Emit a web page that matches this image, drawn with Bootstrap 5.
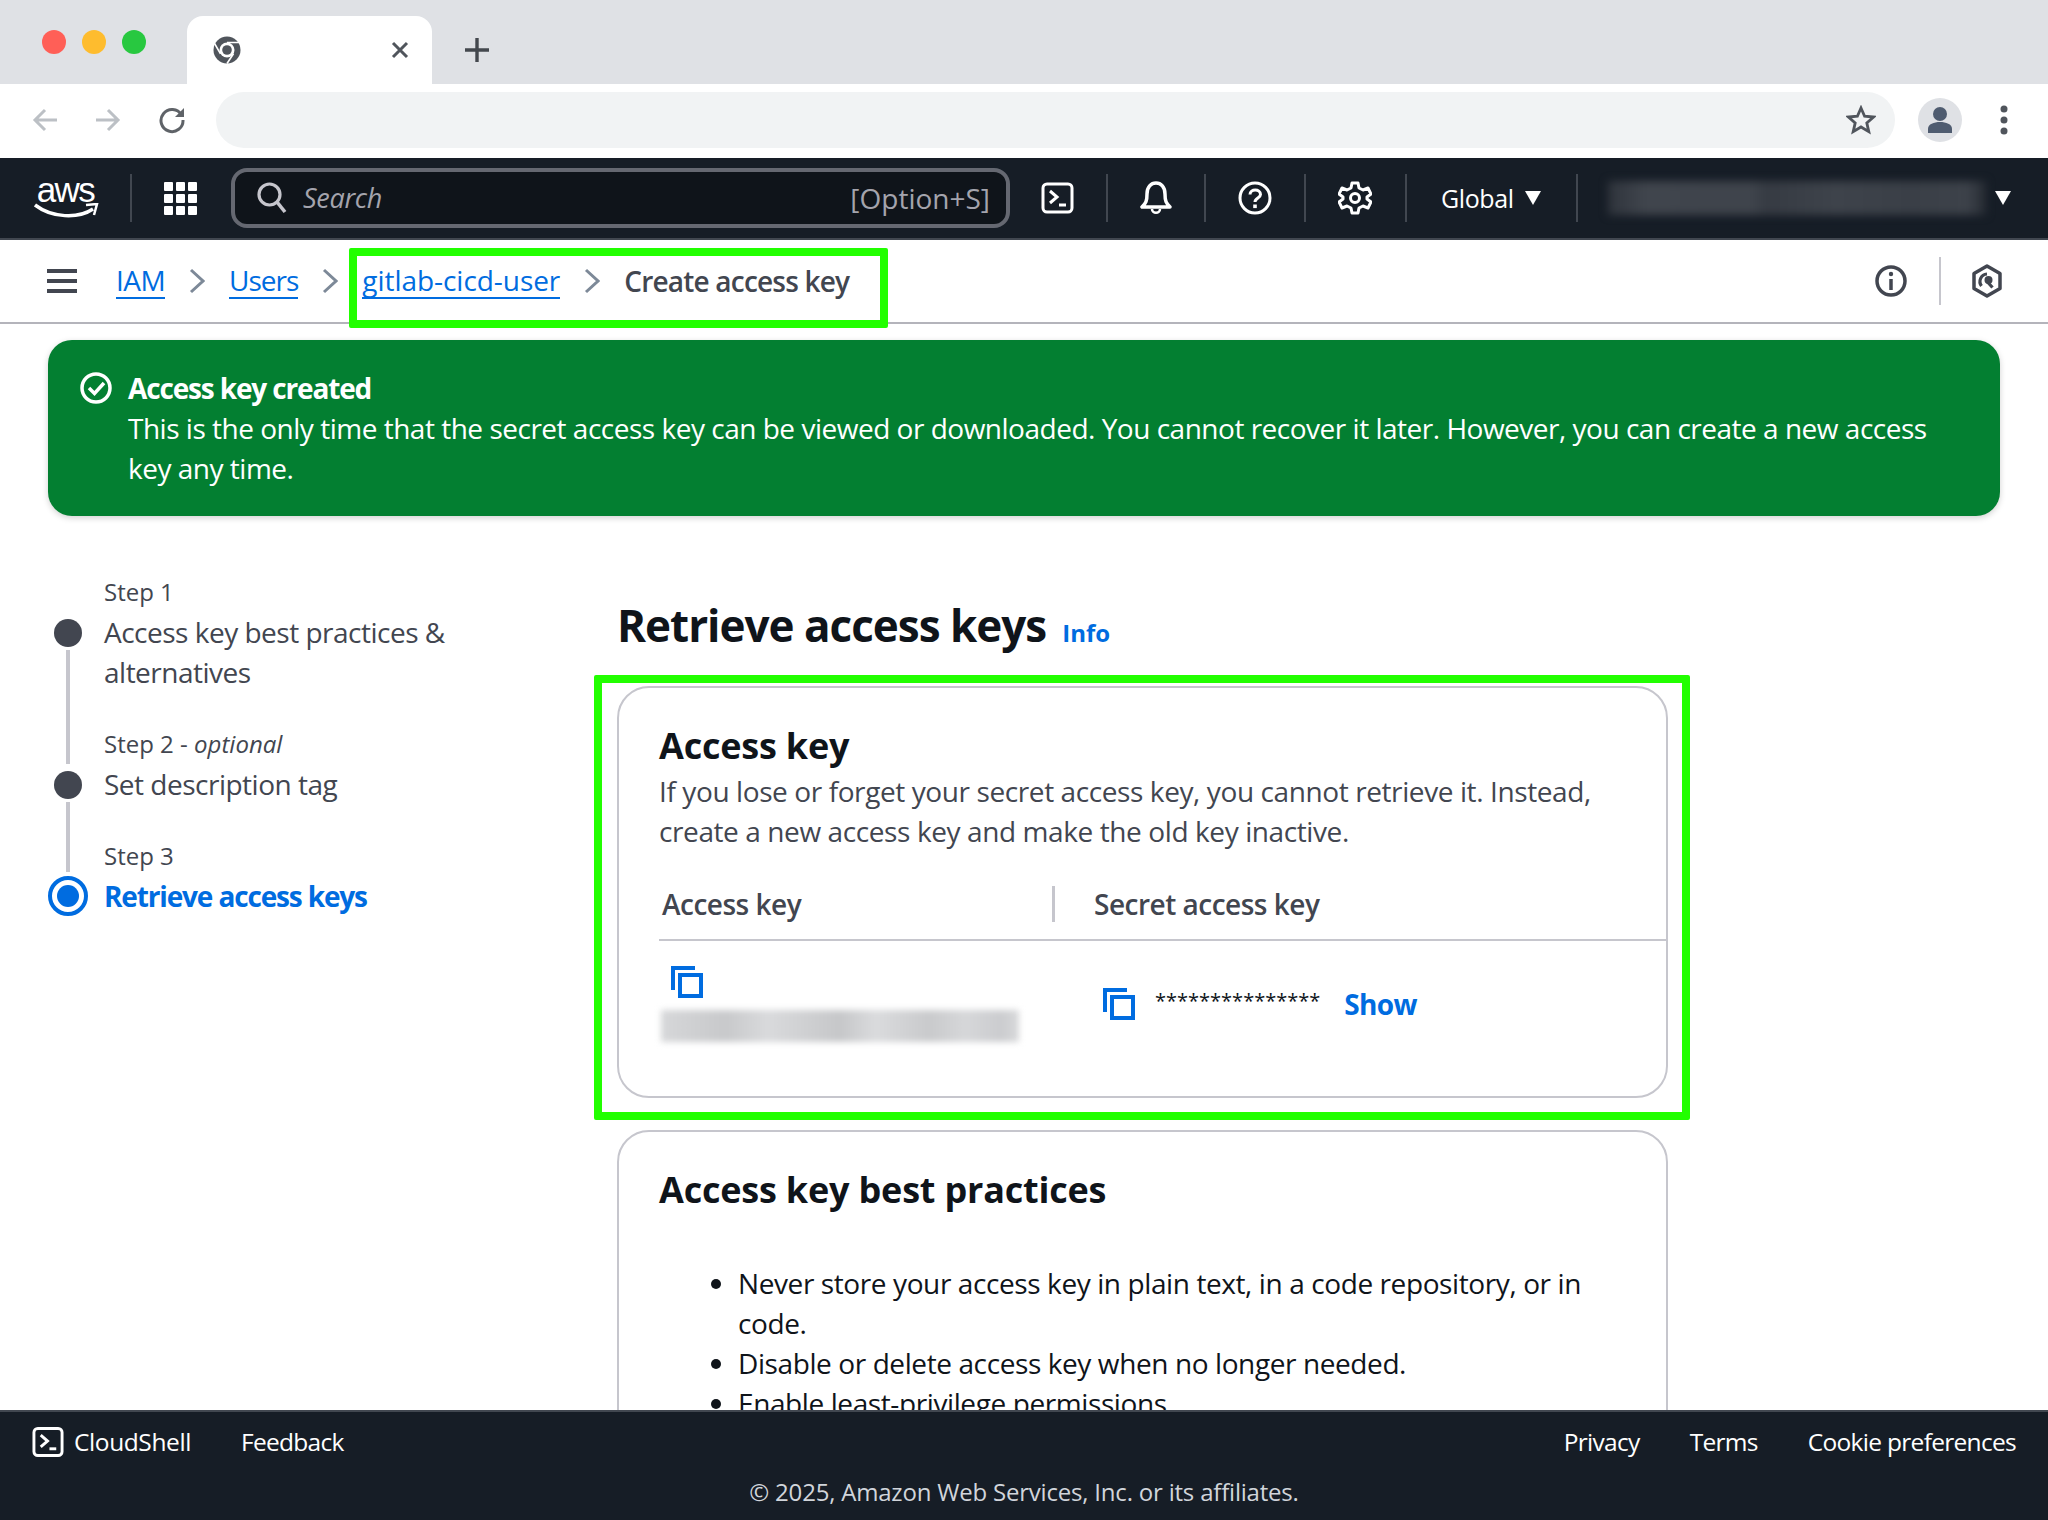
<!DOCTYPE html>
<html lang="en">
<head>
<meta charset="UTF-8">
<title>Create access key</title>
<link href="https://cdn.jsdelivr.net/npm/bootstrap@5.3.0/dist/css/bootstrap.min.css" rel="stylesheet">
<style>
html, body { height: 100%; }
body { font-family: "Open Sans", "Noto Sans", sans-serif; font-size: 28px; line-height: 40px; color: #0f141a; letter-spacing: -0.4px; overflow: hidden; }
a { color: #006ce0; }
svg { display: block; flex: none; }
.pageFrame { height: 1520px; position: relative; }

.tabStrip { height: 84px; background: #dfe1e5; padding-left: 42px; }
.winDot { width: 24px; height: 24px; border-radius: 50%; margin-right: 16px; }
.chromeTab { width: 245px; height: 68px; margin-left: 41px; background: #fff; border-radius: 16px 16px 0 0; padding: 0 22px 0 26px; }
.tabPlus { margin: 0 0 21px 32px; }
.addrBar { height: 74px; padding: 8px 40px 10px 32px; }
.addrField { height: 56px; background: #f1f3f4; border-radius: 28px; margin-left: 30px; margin-right: 23px; padding-right: 19px; }
.avatarDot { width: 44px; height: 44px; border-radius: 50%; background: #dfe1e5; }

.consoleNav { height: 82px; background: #161d26; border-bottom: 2px solid #414750; color: #fff; padding: 0 37px 0 34px; }
.navSep { width: 2px; height: 48px; background: #414750; }
.awsWord { font-family: "Liberation Sans", sans-serif; font-size: 35px; line-height: 24px; letter-spacing: -1.5px; }
.searchBox { width: 779px; height: 60px; background: #0f141a; border: 4px solid #656871; border-radius: 16px; padding: 0 16px 0 22px; color: #a4a4ad; font-size: 27px; letter-spacing: -.3px; margin-right: 31px; }
.searchKeys { font-size: 28px; letter-spacing: 0; }
.searchHint { font-style: italic; }
.navRegion { font-size: 25px; }
.blurAccount { width: 378px; height: 34px; background: linear-gradient(90deg, #2f343c, #40454d 10%, #3f444c 38%, #363b43 42%, #3e434b 60%, #3a3f47 80%, #3d424a 95%, #262b33); filter: blur(4px); }
.tri { width: 0; height: 0; border-left: 8px solid transparent; border-right: 8px solid transparent; border-top: 14px solid #fff; }

.crumbBar { height: 84px; border-bottom: 2px solid #b4b4bb; padding: 0 46px 0 47px; }
.crumbLink { text-decoration: none; border-bottom: 2px solid #006ce0; line-height: 34px; letter-spacing: -.55px; }
.crumbTight { letter-spacing: -1px; }
.crumbWide { letter-spacing: -.05px; }
.crumbNow { color: #424650; font-weight: 600; letter-spacing: -.8px; }
.vertSep { width: 2px; height: 48px; background: #c6c6cd; }

.flashBanner { margin: 16px 48px 0; height: 176px; padding: 28px 32px; border: 0; border-radius: 24px; background: #037f31; color: #fff; box-shadow: 0 2px 6px rgba(0,0,0,.18); letter-spacing: -.49px; }
.flashTitle { font-weight: 700; letter-spacing: -1.15px; }

.mainArea { height: 894px; padding: 56px 48px 0; overflow: hidden; }
.stepCol { width: 569px; }
.stepStem { width: 40px; }
.stemLine { width: 4px; background: #c6c6cd; flex-grow: 1; }
.stepDot { width: 28px; height: 28px; border-radius: 50%; background: #424650; margin: 7px 0 3px; }
.stepOn { width: 40px; height: 40px; border-radius: 50%; border: 4px solid #006ce0; background: #fff; }
.stepOn span { width: 22px; height: 22px; border-radius: 50%; background: #006ce0; }
.stepLabel { height: 40px; font-size: 24px; color: #424650; letter-spacing: 0; }
.stepTitle { width: 400px; color: #424650; padding-bottom: 32px; letter-spacing: -.5px; }
.stepTitleOn { color: #006ce0; font-weight: 700; padding-bottom: 0; letter-spacing: -1.15px; }
.contentCol { width: 1051px; }
.headRow { margin: 25px 0 33px; }
.pageHead { font-size: 44px; line-height: 56px; font-weight: 700; margin: 0; letter-spacing: -1px; }
.infoLink { font-size: 24px; font-weight: 700; text-decoration: none; letter-spacing: 0; }
.panelBox { border: 2px solid #c6c6cd; border-radius: 32px; padding: 33px 0 0 40px; }
.panelKey { height: 412px; }
.panelBest { height: 400px; margin-top: 32px; }
.panelTitle { font-size: 36px; line-height: 50px; font-weight: 700; margin: 0; letter-spacing: -.2px; }
.panelText { color: #424650; width: 950px; margin: 0; }
.keyHead { height: 72px; margin-top: 18px; border-bottom: 2px solid #c6c6cd; color: #424650; font-weight: 600; letter-spacing: -.5px; }
.keyHeadA { width: 393px; padding-left: 3px; }
.keyDivider { width: 3px; height: 36px; background: #c6c6cd; margin-right: 39px; }
.keyLeft { width: 436px; padding-top: 25px; }
.copyTop { margin-left: 12px; }
.blurKey { width: 358px; height: 32px; margin: 12px 0 0 2px; background: linear-gradient(90deg, #d6d7d9, #c8c9cb 18%, #d9dadc 30%, #c6c7c9 50%, #dadbdd 60%, #c9cacc 75%, #d6d7d9 85%, #cbcccf 95%, #d8d9da); filter: blur(3px); }
.secretCell { height: 80px; padding: 46px 0 0 8px; }
.copyGap { margin-right: 20px; }
.stars { font-size: 20px; line-height: 20px; color: #0f141a; letter-spacing: 0; margin-right: 24px; margin-top: -6px; }
.showLink { font-weight: 700; text-decoration: none; letter-spacing: -.6px; }
.panelList { color: #0f141a; margin: 48px 0 0; padding-left: 79px; width: 980px; }

.consoleFoot { height: 110px; background: #161d26; border-top: 2px solid #414750; color: #fff; font-size: 24.500px; line-height: 36px; padding: 12px 32px 0; letter-spacing: -.7px; }
.footShell { letter-spacing: -.4px; }
.footGap { margin-left: 50px; }
.footCopy { color: #d1d5db; margin-top: 14px; letter-spacing: -.2px; font-size: 24px; }

.greenFrame { position: absolute; border: 8px solid #22ff00; border-radius: 2px; }
.frameCrumb { left: 349px; top: 248px; width: 539px; height: 80px; }
.frameKey { left: 594px; top: 675px; width: 1096px; height: 445px; }
</style>
</head>
<body>
<div class="pageFrame">

  <div class="tabStrip d-flex align-items-end">
    <div class="d-flex align-self-center">
      <div class="winDot" style="background:#ff5f57"></div>
      <div class="winDot" style="background:#febc2e"></div>
      <div class="winDot m-0" style="background:#28c840"></div>
    </div>
    <div class="chromeTab d-flex align-items-center justify-content-between">
      <svg width="28" height="28" viewBox="0 0 28 28"><circle cx="14" cy="14" r="13.500" fill="#50555c"/><circle cx="14" cy="14" r="7.500" fill="#fff"/><circle cx="14" cy="14" r="4.800" fill="#50555c"/><path d="M14 6.500H27M7.500 17.800 1 6.500M20.500 17.800 14 27.500" stroke="#fff" stroke-width="1.600" fill="none"/></svg>
      <svg width="20" height="20" viewBox="0 0 20 20"><path d="M3 3 17 17M17 3 3 17" stroke="#50555c" stroke-width="3"/></svg>
    </div>
    <svg class="tabPlus" width="26" height="26" viewBox="0 0 26 26"><path d="M13 1V25M1 13H25" stroke="#44484e" stroke-width="3.400"/></svg>
  </div>

  <div class="addrBar d-flex align-items-center">
    <svg width="26" height="26" viewBox="0 0 26 26" style="margin-right:37px"><path d="M25 13H3M13 3 3 13 13 23" stroke="#bcc0c5" stroke-width="3" fill="none"/></svg>
    <svg width="26" height="26" viewBox="0 0 26 26" style="margin-right:37px"><path d="M1 13H23M13 3 23 13 13 23" stroke="#bcc0c5" stroke-width="3" fill="none"/></svg>
    <svg width="28" height="28" viewBox="0 0 28 28"><path d="M23.500 9A11 11 0 1 0 25 14" stroke="#5f6368" stroke-width="3" fill="none"/><path d="M26 2V11H17Z" fill="#5f6368"/></svg>
    <div class="addrField flex-grow-1 d-flex align-items-center justify-content-end">
      <svg width="30" height="30" viewBox="0 0 30 30"><path d="M15 3 18.600 11.200 27.500 12 20.800 17.900 22.800 26.600 15 22 7.200 26.600 9.200 17.900 2.500 12 11.400 11.200Z" stroke="#50555c" stroke-width="2.800" fill="none"/></svg>
    </div>
    <div class="avatarDot d-flex align-items-center justify-content-center">
      <svg width="26" height="28" viewBox="0 0 26 28"><circle cx="13" cy="8" r="7" fill="#4f5c70"/><path d="M1 27V23C1 18 7 16 13 16S25 18 25 23V27Z" fill="#4f5c70"/></svg>
    </div>
    <svg width="8" height="30" viewBox="0 0 8 30" style="margin-left:38px"><circle cx="4" cy="4" r="3.500" fill="#50555c"/><circle cx="4" cy="15" r="3.500" fill="#50555c"/><circle cx="4" cy="26" r="3.500" fill="#50555c"/></svg>
  </div>

  <nav class="consoleNav d-flex align-items-center">
    <div style="width:63px">
      <div class="awsWord text-center">aws</div>
      <svg width="65" height="16" viewBox="0 0 65 16" style="margin-top:1px"><path d="M1 2C18 15 44 16 59 6" stroke="#fff" stroke-width="3.500" fill="none"/><path d="M52 2 63 1 60 12" stroke="#fff" stroke-width="2.500" fill="none"/></svg>
    </div>
    <div class="navSep" style="margin:0 32px 0 33px"></div>
    <svg width="33" height="33" viewBox="0 0 33 33" fill="#fff" style="margin-right:34px">
      <rect width="9" height="9" rx="1"/><rect x="12" width="9" height="9" rx="1"/><rect x="24" width="9" height="9" rx="1"/>
      <rect y="12" width="9" height="9" rx="1"/><rect x="12" y="12" width="9" height="9" rx="1"/><rect x="24" y="12" width="9" height="9" rx="1"/>
      <rect y="24" width="9" height="9" rx="1"/><rect x="12" y="24" width="9" height="9" rx="1"/><rect x="24" y="24" width="9" height="9" rx="1"/>
    </svg>
    <div class="searchBox d-flex align-items-center justify-content-between">
      <div class="d-flex align-items-center gap-3">
        <svg width="30" height="32" viewBox="0 0 30 32"><circle cx="12.500" cy="12.500" r="10.500" stroke="#c6c6cd" stroke-width="3.200" fill="none"/><path d="M20 20 28 30" stroke="#c6c6cd" stroke-width="3.600"/></svg>
        <span class="searchHint">Search</span>
      </div>
      <span class="searchKeys">[Option+S]</span>
    </div>
    <svg width="33" height="32" viewBox="0 0 33 32"><rect x="2" y="2" width="29" height="28" rx="4" stroke="#fff" stroke-width="3" fill="none"/><path d="M9 9 16 15 9 21" stroke="#fff" stroke-width="3" fill="none"/><path d="M18 23H25" stroke="#fff" stroke-width="3"/></svg>
    <div class="navSep" style="margin:0 32px"></div>
    <svg width="32" height="34" viewBox="0 0 32 34"><path d="M2 26H30C26 22 25 20 25 13C25 6 21 2 16 2S7 6 7 13C7 20 6 22 2 26Z" stroke="#fff" stroke-width="3.500" fill="none" stroke-linejoin="round"/><path d="M12 28C12 33 20 33 20 28" stroke="#fff" stroke-width="2.500" fill="none"/></svg>
    <div class="navSep" style="margin:0 32px"></div>
    <svg width="34" height="34" viewBox="0 0 34 34"><circle cx="17" cy="17" r="15" stroke="#fff" stroke-width="3" fill="none"/><path d="M12 13.500C12 7.500 22.500 7.500 22.500 13.500C22.500 17 17 17 17 21" stroke="#fff" stroke-width="3" fill="none"/><rect x="15.200" y="23.500" width="3.600" height="3.600" fill="#fff"/></svg>
    <div class="navSep" style="margin:0 32px"></div>
    <svg width="34" height="34" viewBox="0 0 34 34"><path d="M14 2H20L21 7 25 9 30 7 33 13 29 16V18L33 21 30 27 25 25 21 27 20 32H14L13 27 9 25 4 27 1 21 5 18V16L1 13 4 7 9 9 13 7Z" stroke="#fff" stroke-width="3" fill="none" stroke-linejoin="round"/><circle cx="17" cy="17" r="4.500" stroke="#fff" stroke-width="3" fill="none"/></svg>
    <div class="navSep" style="margin:0 34px 0 33px"></div>
    <span class="navRegion">Global</span>
    <div class="tri" style="margin:0 35px 0 11px"></div>
    <div class="navSep" style="margin-right:30px"></div>
    <div class="blurAccount"></div>
    <div class="tri ms-auto"></div>
  </nav>

  <div class="crumbBar d-flex align-items-center">
    <svg width="30" height="24" viewBox="0 0 30 24" style="margin-right:39px"><path d="M0 2H30M0 12H30M0 22H30" stroke="#424650" stroke-width="4"/></svg>
    <nav class="d-flex align-items-center flex-grow-1">
      <a class="crumbLink" href="#">IAM</a>
      <svg class="mx-4" width="16" height="26" viewBox="0 0 16 26"><path d="M2 2 14 13 2 24" stroke="#7d8998" stroke-width="3" fill="none"/></svg>
      <a class="crumbLink crumbTight" href="#">Users</a>
      <svg class="mx-4" width="16" height="26" viewBox="0 0 16 26"><path d="M2 2 14 13 2 24" stroke="#7d8998" stroke-width="3" fill="none"/></svg>
      <a class="crumbLink crumbWide" href="#">gitlab-cicd-user</a>
      <svg class="mx-4" width="16" height="26" viewBox="0 0 16 26"><path d="M2 2 14 13 2 24" stroke="#7d8998" stroke-width="3" fill="none"/></svg>
      <span class="crumbNow">Create access key</span>
    </nav>
    <svg width="32" height="32" viewBox="0 0 32 32"><circle cx="16" cy="16" r="14" stroke="#424650" stroke-width="3.500" fill="none"/><path d="M16 14V25" stroke="#424650" stroke-width="3.500"/><circle cx="16" cy="9" r="2.200" fill="#424650"/></svg>
    <div class="vertSep" style="margin:0 31px 0 32px"></div>
    <svg width="30" height="34" viewBox="0 0 30 34"><path d="M15 2 28 9.500V24.500L15 32 2 24.500V9.500Z" stroke="#424650" stroke-width="3.500" fill="none" stroke-linejoin="round"/><path d="M20.500 23.500 15 17.500M9.500 22A7.500 7.500 0 0 1 15 10" stroke="#424650" stroke-width="3.200" fill="none"/><circle cx="16.500" cy="16" r="4" fill="#424650"/></svg>
  </div>

  <div class="flashBanner alert d-flex gap-3 mb-0" role="alert">
    <svg class="mt-1" width="32" height="32" viewBox="0 0 32 32"><circle cx="16" cy="16" r="14" stroke="#fff" stroke-width="3.500" fill="none"/><path d="M9 16 14.500 21.500 24 11" stroke="#fff" stroke-width="3.500" fill="none"/></svg>
    <div>
      <div class="flashTitle">Access key created</div>
      <div>This is the only time that the secret access key can be viewed or downloaded. You cannot recover it later. However, you can create a new access key any time.</div>
    </div>
  </div>

  <div class="mainArea d-flex">
    <div class="stepCol">
      <div class="d-flex"><div class="stepStem me-3"></div><div class="stepLabel">Step 1</div></div>
      <div class="d-flex">
        <div class="stepStem me-3 d-flex flex-column align-items-center"><div class="stepDot"></div><div class="stemLine"></div></div>
        <div class="stepTitle">Access key best practices &amp; alternatives</div>
      </div>
      <div class="d-flex">
        <div class="stepStem me-3 d-flex flex-column align-items-center"><div class="stemLine"></div></div>
        <div class="stepLabel">Step 2 - <em>optional</em></div>
      </div>
      <div class="d-flex">
        <div class="stepStem me-3 d-flex flex-column align-items-center"><div class="stepDot"></div><div class="stemLine"></div></div>
        <div class="stepTitle">Set description tag</div>
      </div>
      <div class="d-flex">
        <div class="stepStem me-3 d-flex flex-column align-items-center"><div class="stemLine mb-1"></div></div>
        <div class="stepLabel">Step 3</div>
      </div>
      <div class="d-flex">
        <div class="stepStem me-3"><div class="stepOn d-flex align-items-center justify-content-center"><span></span></div></div>
        <div class="stepTitle stepTitleOn">Retrieve access keys</div>
      </div>
    </div>

    <div class="contentCol">
      <div class="headRow d-flex align-items-baseline gap-3">
        <h1 class="pageHead">Retrieve access keys</h1>
        <a class="infoLink" href="#">Info</a>
      </div>

      <section class="panelBox panelKey">
        <h2 class="panelTitle">Access key</h2>
        <p class="panelText">If you lose or forget your secret access key, you cannot retrieve it. Instead, create a new access key and make the old key inactive.</p>
        <div class="keyHead d-flex align-items-center">
          <div class="keyHeadA">Access key</div>
          <div class="keyDivider"></div>
          <div>Secret access key</div>
        </div>
        <div class="d-flex">
          <div class="keyLeft">
            <svg class="copyTop" width="32" height="32" viewBox="0 0 32 32"><path d="M2 24V2H24" stroke="#006ce0" stroke-width="4" fill="none"/><rect x="9" y="9" width="21" height="21" stroke="#006ce0" stroke-width="4" fill="none"/></svg>
            <div class="blurKey"></div>
          </div>
          <div class="secretCell d-flex align-items-center">
            <svg class="copyGap" width="32" height="32" viewBox="0 0 32 32"><path d="M2 24V2H24" stroke="#006ce0" stroke-width="4" fill="none"/><rect x="9" y="9" width="21" height="21" stroke="#006ce0" stroke-width="4" fill="none"/></svg>
            <span class="stars">***************</span>
            <a class="showLink" href="#">Show</a>
          </div>
        </div>
      </section>

      <section class="panelBox panelBest">
        <h2 class="panelTitle">Access key best practices</h2>
        <ul class="panelList">
          <li>Never store your access key in plain text, in a code repository, or in code.</li>
          <li>Disable or delete access key when no longer needed.</li>
          <li>Enable least-privilege permissions.</li>
        </ul>
      </section>
    </div>
  </div>

  <footer class="consoleFoot">
    <div class="d-flex align-items-center">
      <svg width="32" height="32" viewBox="0 0 33 32" style="margin-right:10px"><rect x="2" y="2" width="29" height="28" rx="4" stroke="#fff" stroke-width="3" fill="none"/><path d="M9 9 16 15 9 21" stroke="#fff" stroke-width="3" fill="none"/><path d="M18 23H25" stroke="#fff" stroke-width="3"/></svg>
      <span class="footShell">CloudShell</span>
      <span class="footGap">Feedback</span>
      <span class="ms-auto">Privacy</span>
      <span class="footGap">Terms</span>
      <span class="footGap">Cookie preferences</span>
    </div>
    <div class="footCopy text-center">© 2025, Amazon Web Services, Inc. or its affiliates.</div>
  </footer>

  <div class="greenFrame frameCrumb"></div>
  <div class="greenFrame frameKey"></div>
</div>
<script src="https://cdn.jsdelivr.net/npm/bootstrap@5.3.0/dist/js/bootstrap.bundle.min.js"></script>
</body>
</html>
